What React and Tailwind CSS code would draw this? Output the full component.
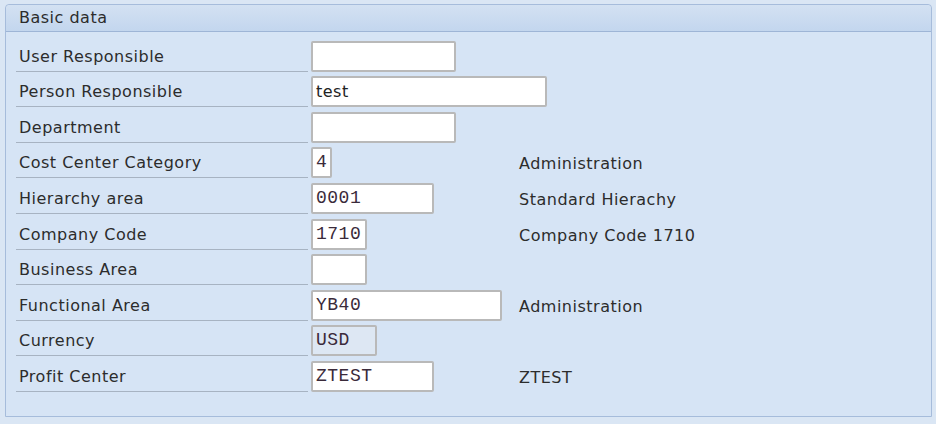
import React from 'react';

const rows = [
  { label: 'User Responsible', value: '', width: 'w-[145px]' },
  { label: 'Person Responsible', value: 'test', width: 'w-[236px]', prop: true },
  { label: 'Department', value: '', width: 'w-[145px]' },
  { label: 'Cost Center Category', value: '4', width: 'w-[21px]', desc: 'Administration' },
  { label: 'Hierarchy area', value: '0001', width: 'w-[123px]', desc: 'Standard Hierachy' },
  { label: 'Company Code', value: '1710', width: 'w-[56px]', desc: 'Company Code 1710' },
  { label: 'Business Area', value: '', width: 'w-[56px]' },
  { label: 'Functional Area', value: 'YB40', width: 'w-[191px]', desc: 'Administration' },
  { label: 'Currency', value: 'USD', width: 'w-[66px]', readOnly: true },
  { label: 'Profit Center', value: 'ZTEST', width: 'w-[123px]', desc: 'ZTEST' },
];

function Field({ row }) {
  return (
    <div
      className={`${row.width} shrink-0 h-[31px] border-2 border-[#b9b9b9] rounded-[2px] flex items-center pl-[3px] ${
        row.readOnly ? 'bg-[#dde7f3]' : 'bg-white'
      }`}
    >
      <span
        className={
          row.prop
            ? "text-[16px] tracking-[0.5px] text-[#222] font-['DejaVu_Sans',sans-serif]"
            : "text-[18px] text-[#3a2a3a] font-['Liberation_Mono',monospace]"
        }
      >
        {row.value}
      </span>
    </div>
  );
}

export default function App() {
  return (
    <div className="w-[936px] h-[424px] bg-[#dae6f4] pt-[4px] pl-[5px] font-['DejaVu_Sans',sans-serif] tracking-[0.5px] text-[#2c2c2c]">
      <div className="w-[927px] h-[413px] border border-[#a6bcdb] rounded-t-[4px] bg-[#d6e4f5] flex flex-col">
        <div className="h-[27px] border-b border-[#9eb5d6] bg-gradient-to-b from-[#d3e1f2] to-[#c3d6ee] rounded-t-[4px] flex items-center pl-[13px] text-[16px] leading-[20px]">
          Basic data
        </div>
        <div className="pt-[4px] flex flex-col">
          {rows.map((row) => (
            <div key={row.label} className="h-[35.6px] flex items-end">
              <div className="ml-[10px] w-[292px] shrink-0 h-full border-b border-[#a7b3c2] flex items-end pl-[3px] pb-[4px] text-[16px] leading-[20px]">
                {row.label}
              </div>
              <div className="ml-[3px] w-[208px] shrink-0 h-full flex items-end">
                <Field row={row} />
              </div>
              {row.desc && (
                <div className="h-full flex items-end pb-[4px] text-[16px] leading-[20px]">
                  {row.desc}
                </div>
              )}
            </div>
          ))}
        </div>
      </div>
    </div>
  );
}
